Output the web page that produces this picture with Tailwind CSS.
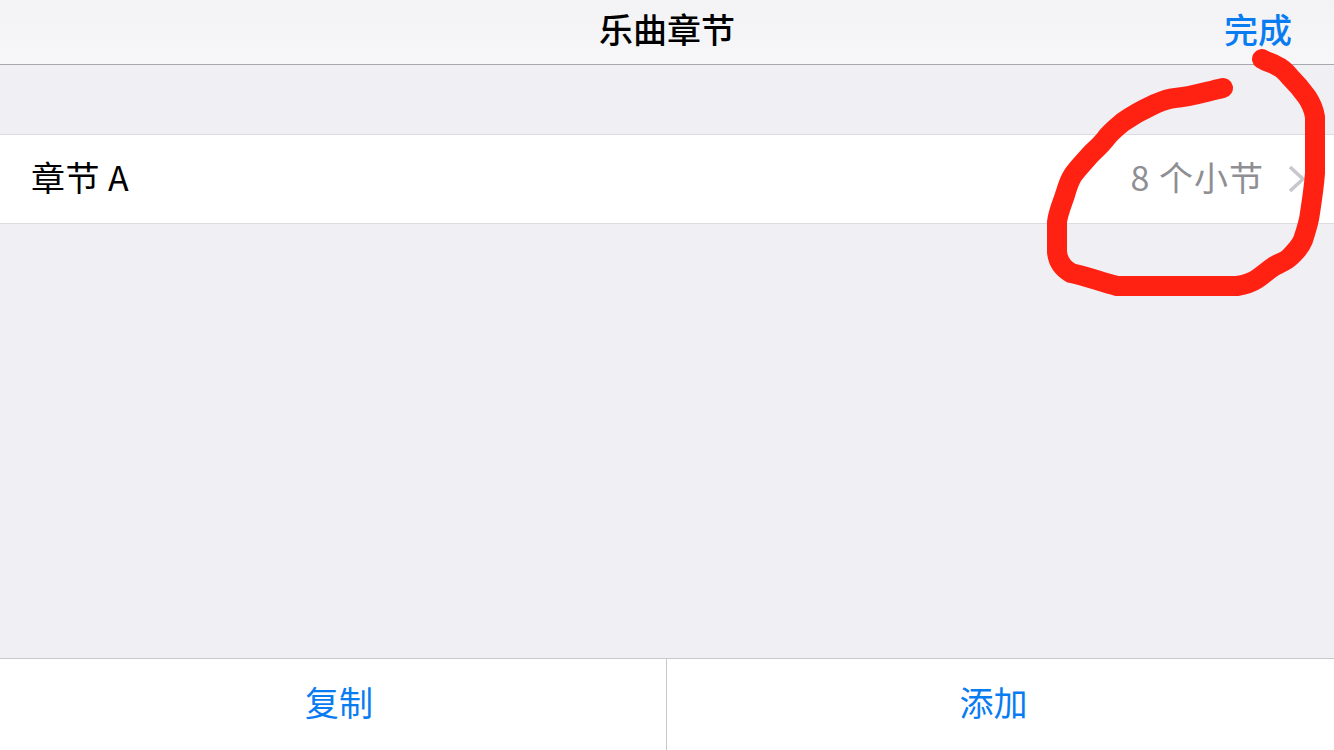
<!DOCTYPE html>
<html lang="zh">
<head>
  <meta charset="UTF-8">
  <title>乐曲章节</title>
  <script src="https://cdn.jsdelivr.net/npm/@tailwindcss/browser@4"></script>
</head>
<body class="bg-[#efeff4] font-['Noto_Sans_CJK_SC','Noto_Sans',sans-serif]">
  <div class="relative w-[1334px] h-[750px] overflow-hidden flex flex-col">
    <!-- Nav bar -->
    <header class="h-[65px] shrink-0 grid grid-cols-[1fr_auto_1fr] items-center bg-gradient-to-b from-[#f3f3f5] to-[#f7f7f9] border-b border-[#a9a9ad] pb-[6px]">
      <div></div>
      <h1 class="text-[34px] font-medium leading-none text-black">乐曲章节</h1>
      <button class="justify-self-end mr-[42px] text-[34px] font-medium leading-none text-[#0a7cf2]">完成</button>
    </header>

    <!-- List -->
    <main class="flex-1 pt-[69px]">
      <div class="h-[90px] flex items-center justify-between bg-white border-y border-[#dcdce0] pl-[31px] pr-[28px]">
        <span class="text-[34px] tracking-[0.5px] leading-none text-black pb-[5px]">章节 A</span>
        <div class="flex items-center gap-[24px]">
          <span class="text-[34px] tracking-[1px] leading-none text-[#8e8e93] pb-[5px]">8 个小节</span>
          <svg class="w-[18px] h-[28px]" viewBox="0 0 18 28" fill="none" stroke="#c7c7cc" stroke-width="3.5"><path d="M2 2l13 12L2 26"/></svg>
        </div>
      </div>
    </main>

    <!-- Bottom toolbar -->
    <footer class="h-[92px] shrink-0 grid grid-cols-2 bg-white border-t border-[#c8c8cc]">
      <button class="text-[34px] leading-none text-[#0a7cf2] pb-[5px] pl-[12px] border-r border-[#c8c8cc]">复制</button>
      <button class="text-[34px] leading-none text-[#0a7cf2] pb-[5px] pr-[14px]">添加</button>
    </footer>

    <!-- Red marker scribble over the screenshot -->
    <svg class="absolute inset-0 pointer-events-none" width="1334" height="750" viewBox="0 0 1334 750" fill="none">
      <path d="M1223 88C1205 92 1190 97 1175 98C1165 99 1160 102 1153 105C1142 110 1133 115 1123 122C1117 127 1112 131 1107 137C1102 144 1096 149 1090 155C1084 162 1078 168 1073 175C1069 181 1067 188 1065 195C1062 204 1058 213 1057 222L1057 252C1058 263 1064 269 1071 273C1086 276 1101 282 1117 286L1237 286C1244 285 1251 283 1257 279C1263 275 1267 271 1273 267C1279 263 1285 262 1290 257C1296 251 1300 247 1303 240C1306 231 1309 222 1310 213C1312 200 1314 187 1315 173L1315 117C1314 110 1311 103 1307 97C1302 90 1296 83 1290 77C1286 72 1282 68 1277 66C1272 62 1268 63 1262 59" stroke="#ff2212" stroke-width="20" stroke-linecap="round" stroke-linejoin="round"/>
    </svg>
  </div>
</body>
</html>
